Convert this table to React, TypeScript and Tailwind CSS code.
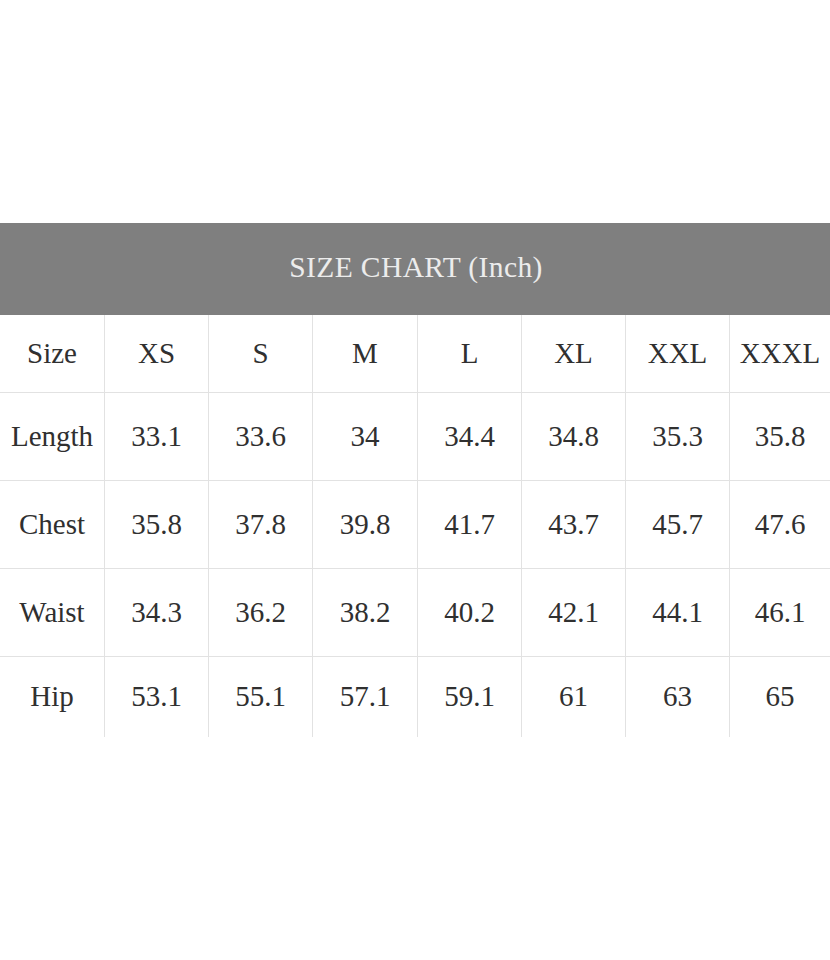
const sizes = ["XS", "S", "M", "L", "XL", "XXL", "XXXL"];

const rows = [
    { label: "Length", values: ["33.1", "33.6", "34", "34.4", "34.8", "35.3", "35.8"], h: "h-[88px]" },
    { label: "Chest", values: ["35.8", "37.8", "39.8", "41.7", "43.7", "45.7", "47.6"], h: "h-[88px]" },
    { label: "Waist", values: ["34.3", "36.2", "38.2", "40.2", "42.1", "44.1", "46.1"], h: "h-[88px]" },
    { label: "Hip", values: ["53.1", "55.1", "57.1", "59.1", "61", "63", "65"], h: "h-[80px]" },
];

const cols = "grid grid-cols-[105px_104px_104px_105px_104px_104px_104px_1fr]";

function Cell({ children, last, bottom, h }: { children: React.ReactNode; last?: boolean; bottom?: boolean; h: string }) {
    return (
        <div
            className={`${h} flex items-center justify-center border-[#e2e2e2] ${last ? "" : "border-r"} ${bottom ? "" : "border-b"}`}
        >
            {children}
        </div>
    );
}

export default function App() {
    return (
        <div className="w-[830px] h-[960px] bg-white pt-[223px] font-['Liberation_Serif',serif] text-[#303030]">
            {/* Title bar */}
            <div className="h-[92px] bg-[#7f7f7f] flex items-center justify-center pb-[4px]">
                <span className="text-[29.5px] text-[#ececec] tracking-[0.4px] pl-[2px]">SIZE CHART (Inch)</span>
            </div>

            {/* Table */}
            <div className={`${cols} text-[29px]`}>
                <Cell h="h-[78px]">Size</Cell>
                {sizes.map((s, i) => (
                    <Cell key={s} h="h-[78px]" last={i === sizes.length - 1}>
                        {s}
                    </Cell>
                ))}
                {rows.map((r, ri) => (
                    <div key={r.label} className="contents">
                        <Cell h={r.h} bottom={ri === rows.length - 1}>
                            {r.label}
                        </Cell>
                        {r.values.map((v, i) => (
                            <Cell key={i} h={r.h} last={i === r.values.length - 1} bottom={ri === rows.length - 1}>
                                {v}
                            </Cell>
                        ))}
                    </div>
                ))}
            </div>
        </div>
    );
}
